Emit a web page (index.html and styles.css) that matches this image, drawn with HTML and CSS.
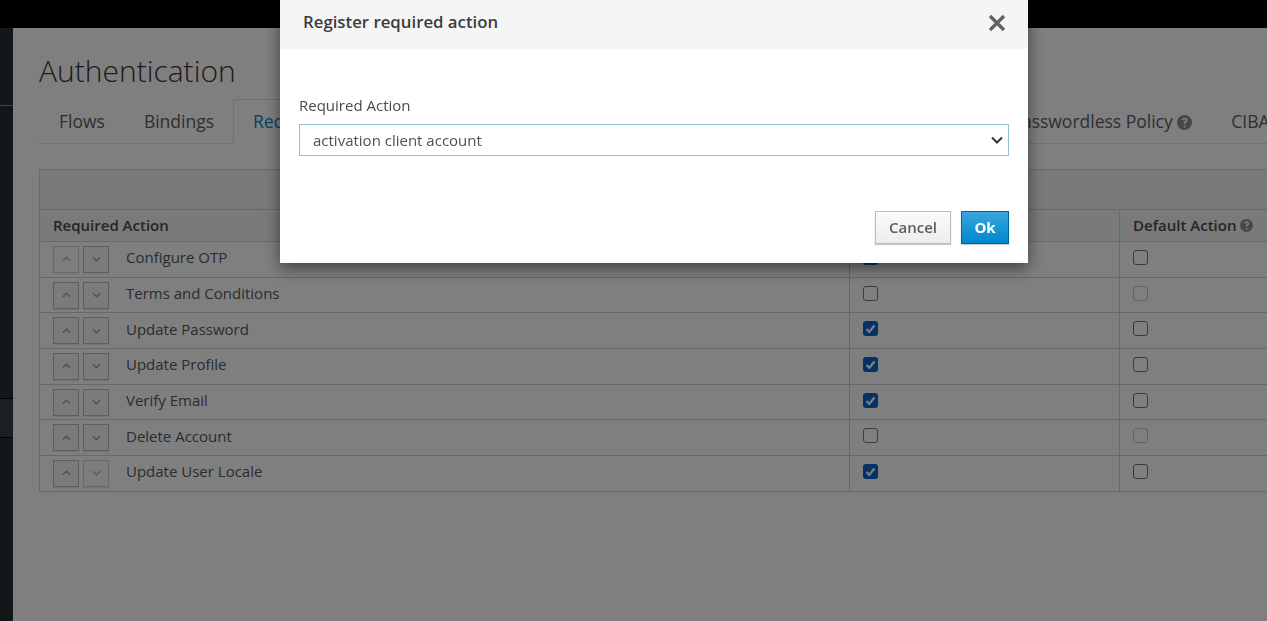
FILE: index.html
```html
<!DOCTYPE html>
<html lang="en">
<head>
  <meta charset="UTF-8" />
  <title>Authentication</title>
  <link rel="stylesheet" href="styles.css">
</head>
<body>

  <div class="top-bar"></div>

  <div class="page">
    <div class="side">
      <div class="side-top"></div>
      <div class="side-item"></div>
    </div>

    <div class="content">
      <h1>Authentication</h1>

      <ul class="tabs">
        <li>Flows</li>
        <li>Bindings</li>
        <li class="active">Required Actions</li>
        <li>Password Policy</li>
        <li>OTP Policy</li>
        <li>WebAuthn Policy <svg class="help help-big" viewBox="0 0 16 16"><use href="#help"/></svg></li>
        <li>WebAuthn Passwordless Policy <svg class="help help-big" viewBox="0 0 16 16"><use href="#help"/></svg></li>
        <li>CIBA Policy</li>
      </ul>

      <table class="actions">
        <colgroup>
          <col class="col-name">
          <col class="col-enabled">
          <col class="col-default">
        </colgroup>
        <thead>
          <tr class="toolbar"><th colspan="3"></th></tr>
          <tr class="heads">
            <th>Required Action</th>
            <th>Enabled</th>
            <th>Default Action <svg class="help" viewBox="0 0 16 16"><use href="#help"/></svg></th>
          </tr>
        </thead>
        <tbody id="rows"></tbody>
      </table>
    </div>
  </div>

  <div class="backdrop"></div>

  <div class="modal">
    <div class="modal-head">
      <h2>Register required action</h2>
      <svg class="close" viewBox="0 0 18 18"><path d="M2 2l14 14M16 2L2 16"/></svg>
    </div>
    <div class="modal-body">
      <label for="action">Required Action</label>
      <div class="select-wrap">
        <select id="action">
          <option>activation client account</option>
        </select>
        <svg class="chevron" viewBox="0 0 12 8"><path d="M1 1.500l5 5 5-5"/></svg>
      </div>
    </div>
    <div class="modal-foot">
      <button class="btn">Cancel</button>
      <button class="btn primary">Ok</button>
    </div>
  </div>

  <svg class="defs" width="0" height="0">
    <symbol id="help" viewBox="0 0 16 16">
      <path fill-rule="evenodd" d="M8 0a8 8 0 1 1 0 16A8 8 0 0 1 8 0zM7 11.200v2h2.100v-2zM8.100 2.800c-1.700 0-3 .8-3.300 2.600l1.900.4c.2-.9.6-1.200 1.300-1.200.7 0 1.100.4 1.100 1 0 .5-.3.8-.9 1.200-1 .7-1.200 1.300-1.200 2.200v.6h2v-.4c0-.5.2-.7.8-1.100 1-.7 1.500-1.400 1.500-2.600 0-1.700-1.400-2.700-3.200-2.700z"/>
    </symbol>
  </svg>

  <script>
    const rows = [
      { name: "Configure OTP", enabled: true, def: "off" },
      { name: "Terms and Conditions", enabled: false, def: "disabled" },
      { name: "Update Password", enabled: true, def: "off" },
      { name: "Update Profile", enabled: true, def: "off" },
      { name: "Verify Email", enabled: true, def: "off" },
      { name: "Delete Account", enabled: false, def: "disabled" },
      { name: "Update User Locale", enabled: true, def: "off" }
    ];

    const tick = '<svg viewBox="0 0 15 15"><path d="M3.500 8l2.800 2.800 5.200-6.300"/></svg>';
    const up = '<svg viewBox="0 0 10 6"><path d="M1 5l4-4 4 4"/></svg>';
    const down = '<svg viewBox="0 0 10 6"><path d="M1 1l4 4 4-4"/></svg>';

    const tbody = document.getElementById("rows");
    rows.forEach((row, i) => {
      const tr = document.createElement("tr");
      tr.innerHTML = `
        <td>
          <div class="name-cell">
            <span class="arrow ${i === 0 ? 'off' : ''}">${up}</span>
            <span class="arrow ${i === rows.length - 1 ? 'off' : ''}">${down}</span>
            <span class="name">${row.name}</span>
          </div>
        </td>
        <td><span class="check ${row.enabled ? 'on' : ''}">${row.enabled ? tick : ''}</span></td>
        <td><span class="check ${row.def === 'disabled' ? 'off' : ''}"></span></td>
      `;
      tbody.appendChild(tr);
    });
  </script>

</body>
</html>
```

FILE: styles.css
```css
html, body {
  height: 100%;
}
body {
  margin: 0;
  font-family: 'Open Sans', sans-serif;
  font-size: 15px;
  color: #4a4a4a;
  background-color: #fff;
  overflow: hidden;
  display: flex;
  flex-direction: column;
}
.top-bar {
  height: 28px;
  flex: none;
  background-color: #000;
}
.page {
  flex: 1;
  display: flex;
  min-height: 0;
}
.side {
  width: 13px;
  flex: none;
  background-color: #292e34;
  padding-top: 77px;
}
.side-top {
  height: 1px;
  background-color: #8a8a8a;
}
.side-item {
  height: 38px;
  margin-top: 292px;
  background-color: #393f44;
  border-top: 1px solid #030303;
  border-bottom: 1px solid #030303;
}
.content {
  flex: 1;
  min-width: 0;
  padding: 0 0 0 26px;
}
h1 {
  margin: 26px 0 0;
  font-size: 30px;
  font-weight: 300;
  line-height: 34px;
  color: #363636;
}
.tabs {
  display: flex;
  width: 1300px;
  margin: 11px 0 0;
  padding: 0;
  list-style: none;
  border-bottom: 1px solid #e1e1e1;
  font-size: 17.500px;
  white-space: nowrap;
}
.tabs li {
  height: 44px;
  line-height: 42px;
  padding: 0 19px;
  box-sizing: border-box;
  border: 1px solid transparent;
  border-bottom: none;
  margin-right: -1px;
  color: #5a5e63;
}
.tabs li.active {
  border-color: #e1e1e1;
  color: #0088ce;
  background-color: #fff;
  height: 45px;
  margin-bottom: -1px;
}
.actions {
  width: 1260px;
  margin-top: 25px;
  border-collapse: collapse;
  table-layout: fixed;
}
.col-name { width: 810px; }
.col-enabled { width: 270px; }
.actions th, .actions td {
  border: 1px solid #d1d1d1;
  padding: 0 13px;
  text-align: left;
}
.actions th {
  background-color: #f5f5f5;
  font-weight: 600;
  font-size: 15px;
}
.toolbar th {
  height: 39px;
  border-bottom-color: #d1d1d1;
}
.heads th {
  height: 29px;
  padding-bottom: 2px;
}
.actions td {
  height: 34.700px;
  background-color: #fff;
}
.name-cell {
  display: flex;
  align-items: center;
  gap: 4px;
}
.name {
  margin-left: 13px;
  padding-bottom: 4px;
  color: #55595e;
}
.arrow {
  width: 26px;
  height: 27px;
  box-sizing: border-box;
  display: flex;
  align-items: center;
  justify-content: center;
  border: 1px solid #bbb;
  background-color: #f6f6f6;
  box-shadow: 0 1px 1px rgba(3, 3, 3, .08);
}
.arrow svg {
  width: 9px;
  height: 6px;
  fill: none;
  stroke: #a0a0a0;
  stroke-width: 1.500;
}
.arrow.off {
  border-color: #d1d1d1;
  background-color: #fafafa;
}
.arrow.off svg {
  stroke: #b4b4b4;
}
.check {
  display: block;
  width: 15px;
  height: 15px;
  margin-bottom: 4px;
  box-sizing: border-box;
  border: 1.500px solid #767676;
  border-radius: 3px;
  background-color: #fff;
}
.check.on {
  border: none;
  background-color: #0a62d0;
}
.check.off {
  border-color: #c4c4c4;
}
.check svg {
  display: block;
  width: 15px;
  height: 15px;
  fill: none;
  stroke: #fff;
  stroke-width: 2.200;
}
.help {
  width: 13px;
  height: 13px;
  fill: #8b8d8f;
  vertical-align: -1px;
}
.help-big {
  width: 15px;
  height: 15px;
  vertical-align: -2px;
}
.defs {
  position: absolute;
}
.backdrop {
  position: fixed;
  inset: 0;
  background-color: rgba(0, 0, 0, .5);
}
.modal {
  position: fixed;
  top: 0;
  left: 280px;
  width: 748px;
  height: 263px;
  background-color: #fff;
  box-shadow: 0 5px 15px rgba(0, 0, 0, .5);
  display: flex;
  flex-direction: column;
}
.modal-head {
  height: 49px;
  flex: none;
  display: flex;
  align-items: center;
  justify-content: space-between;
  padding: 0 22px 7px 23px;
  box-sizing: border-box;
  background-color: #f5f5f5;
}
.modal-head h2 {
  margin: 0;
  font-size: 16.800px;
  font-weight: 600;
  color: #3c3c3c;
}
.close {
  width: 18px;
  height: 18px;
  margin-top: 4px;
  fill: none;
  stroke: #606060;
  stroke-width: 3.200;
}
.modal-body {
  padding: 46px 19px 0;
}
.modal-body label {
  display: block;
  margin-bottom: 9px;
  line-height: 20px;
}
.select-wrap {
  position: relative;
}
select {
  width: 100%;
  height: 32px;
  display: block;
  appearance: none;
  padding: 0 13px;
  border: 1px solid #8dc1d0;
  border-radius: 0;
  background-color: #fff;
  color: #4f4f4f;
  font-family: 'Open Sans', sans-serif;
  font-size: 15px;
  outline: none;
}
.chevron {
  position: absolute;
  top: 12px;
  right: 6px;
  width: 12px;
  height: 8px;
  fill: none;
  stroke: #333;
  stroke-width: 2;
}
.modal-foot {
  margin-top: auto;
  padding: 0 19px 19px;
  display: flex;
  justify-content: flex-end;
  gap: 10px;
}
.btn {
  height: 33px;
  padding: 0 13px 2px;
  border: 1px solid #bbb;
  background: linear-gradient(#fafafa, #ededed);
  box-shadow: 0 1px 1px rgba(3, 3, 3, .2);
  color: #5a5e63;
  font-family: 'Open Sans', sans-serif;
  font-size: 15px;
  font-weight: 600;
  cursor: pointer;
}
.btn.primary {
  width: 48px;
  padding: 0 0 2px;
  border-color: #00659c;
  background: linear-gradient(#39a5dc, #0088ce);
  color: #fff;
  font-weight: 700;
}
```
